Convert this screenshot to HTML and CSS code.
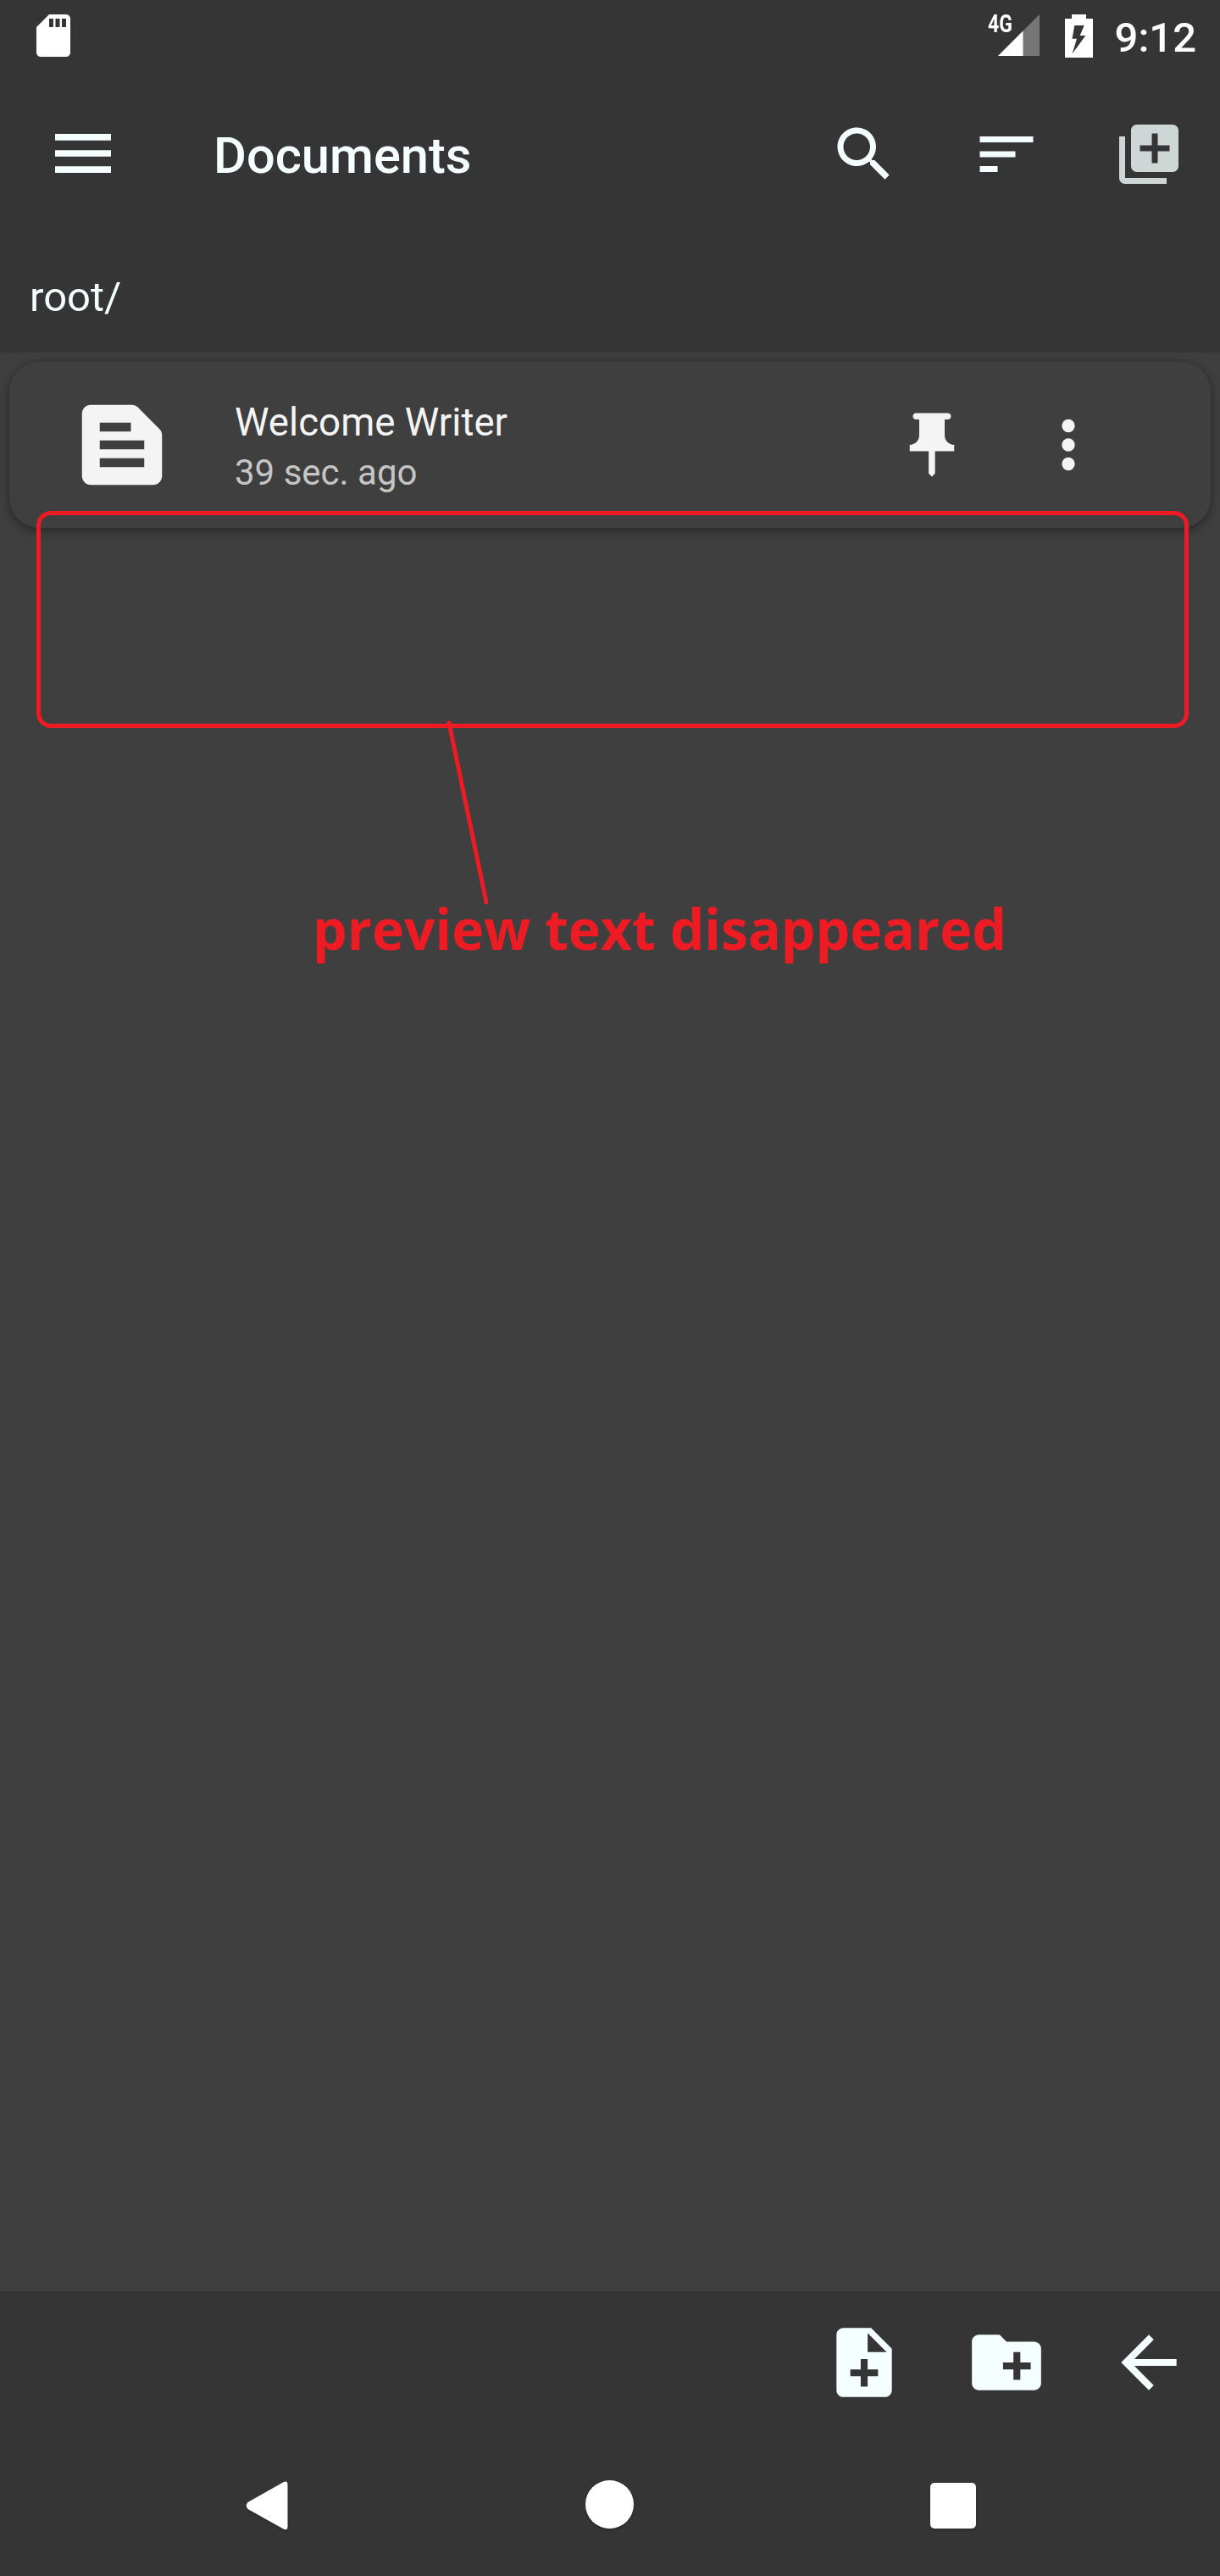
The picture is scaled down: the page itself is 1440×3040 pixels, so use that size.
FILE: index.html
```html
<!DOCTYPE html>
<html lang="en">
<head>
<meta charset="utf-8">
<title>Documents</title>
<link rel="stylesheet" href="styles.css">
</head>
<body>
<div class="screen">
  <header class="status-bar">
    <svg class="sd-card" viewBox="0 0 24 24"><path d="M18 2h-8L4 8v12c0 1.1.9 2 2 2h12c1.1 0 2-.9 2-2V4c0-1.100-.9-2-2-2zm-6 6h-2V4h2v4zm3 0h-2V4h2v4zm3 0h-2V4h2v4z"/></svg>
    <div class="signal">
      <span class="network">4G</span>
      <svg class="bars" viewBox="0 0 49 49"><path d="M0 49L49 0V49z" opacity=".32"/><path d="M0 49L29.500 19.500V49z"/></svg>
    </div>
    <svg class="battery" viewBox="0 0 33 51"><path fill-rule="evenodd" d="M8 0H25V5H33V51H0V5H8zM11.300 13H22.700L17.700 25H24.300L8.700 46.300L14 28.700H8.500z"/></svg>
    <span class="clock">9:12</span>
  </header>
  <nav class="toolbar">
    <svg class="menu" viewBox="0 0 66 46"><path d="M0 0H66V7.700H0zM0 19.150H66V26.850H0zM0 38.300H66V46H0z"/></svg>
    <h1 class="title">Documents</h1>
    <div class="actions">
      <svg class="icon" viewBox="0 0 24 24"><path d="M15.500 14h-.79l-.28-.27C15.410 12.590 16 11.110 16 9.500 16 5.910 13.090 3 9.500 3S3 5.910 3 9.500 5.910 16 9.500 16c1.610 0 3.090-.59 4.230-1.570l.27.28v.79l5 4.990L20.490 19l-4.990-5zm-6 0C7.010 14 5 11.990 5 9.500S7.010 5 9.500 5 14 7.010 14 9.500 11.990 14 9.500 14z"/></svg>
      <svg class="icon" viewBox="0 0 24 24"><path d="M3 18h6v-2H3v2zM3 6v2h18V6H3zm0 7h12v-2H3v2z"/></svg>
      <svg class="icon dim" viewBox="0 0 24 24"><path d="M4 6H2v14c0 1.100.9 2 2 2h14v-2H4V6zm16-4H8c-1.100 0-2 .9-2 2v12c0 1.100.9 2 2 2h12c1.100 0 2-.9 2-2V4c0-1.100-.9-2-2-2zm-1 9h-4v4h-2v-4H9V9h4V5h2v4h4v2z"/></svg>
    </div>
  </nav>
  <div class="path">root/</div>
  <main class="content">
    <article class="card">
      <svg class="file" viewBox="0 0 24 24"><path d="M20.410 8.410l-4.830-4.830C15.210 3.210 14.700 3 14.170 3H5C3.900 3 3 3.900 3 5v14c0 1.100.9 2 2 2h14c1.100 0 2-.9 2-2V9.830C21 9.300 20.790 8.790 20.410 8.410zM7 7h7v2H7V7zM17 17H7v-2h10V17zM17 13H7v-2h10V13z"/></svg>
      <div class="labels">
        <span class="name">Welcome Writer</span>
        <span class="age">39 sec. ago</span>
      </div>
      <svg class="pin" viewBox="0 0 24 24"><path d="M16 9V4h1c.55 0 1-.45 1-1s-.45-1-1-1H7c-.55 0-1 .45-1 1s.45 1 1 1h1v5c0 1.660-1.340 3-3 3v2h5.970v7l1 1 1-1v-7H19v-2c-1.660 0-3-1.340-3-3z"/></svg>
      <svg class="more" viewBox="0 0 24 24"><circle cx="12" cy="6" r="2.050"/><circle cx="12" cy="12" r="2.050"/><circle cx="12" cy="18" r="2.050"/></svg>
    </article>
    <div class="callout-box"></div>
    <svg class="callout-line" viewBox="0 0 54 224"><path d="M5 5L49 217"/></svg>
    <div class="callout-text">preview text disappeared</div>
  </main>
  <footer class="bottom-bar">
    <svg class="icon-lg" viewBox="0 0 24 24"><path d="M14 2H6c-1.100 0-2 .9-2 2v16c0 1.100.9 2 2 2h12c1.100 0 2-.9 2-2V8l-6-6zm2 14h-3v3h-2v-3H8v-2h3v-3h2v3h3v2zm-3-7V3.500L18.500 9H13z"/></svg>
    <svg class="icon-lg" viewBox="0 0 24 24"><path d="M20 6h-8l-2-2H4c-1.110 0-2 .89-2 2v12c0 1.110.89 2 2 2h16c1.110 0 2-.89 2-2V8c0-1.110-.89-2-2-2zm-1 8h-3v3h-2v-3h-3v-2h3V9h2v3h3v2z"/></svg>
    <svg class="icon-lg" viewBox="0 0 24 24"><path d="M20 11H7.830l5.590-5.590L12 4l-8 8 8 8 1.410-1.410L7.830 13H20v-2z"/></svg>
  </footer>
  <div class="system-nav">
    <svg class="back" viewBox="0 0 50 58"><path d="M2.500 25L44.500 1.200Q49.500 -.8 49.500 4V54Q49.500 58.800 44.500 56.500L2.500 33Q-1 29 2.500 25z"/></svg>
    <span class="home"></span>
    <span class="recent"></span>
  </div>
</div>
</body>
</html>
```
FILE: styles.css
```css
* { box-sizing: border-box; }
body { margin: 0; background: #3f3f3f; font-family: Roboto, sans-serif; }
svg { display: block; flex: none; fill: currentColor; }
.screen { width: 1440px; height: 3040px; display: flex; flex-direction: column; overflow: hidden; color: #f5ffff; }

.status-bar { height: 84px; padding: 0 28px 0 33px; display: flex; align-items: center; background: #353535; color: #fff; }
.sd-card { width: 60px; height: 60px; }
.signal { display: flex; align-items: flex-start; margin-left: auto; height: 50px; }
.network { width: 12px; font: 700 29.500px/22px Roboto, sans-serif; white-space: nowrap; }
.network { transform: scaleX(.78); transform-origin: 0 0; }
.bars { width: 49px; height: 49px; }
.battery { width: 33px; height: 51px; margin-left: 30px; }
.clock { margin-left: 26px; padding-top: 5px; font-size: 49px; font-weight: 500; line-height: 58px; }

.toolbar { height: 196px; padding: 0 42px 0 65px; display: flex; align-items: center; background: #353535; }
.menu { width: 66px; height: 46px; margin-top: -3px; }
.title { margin: 4px 0 0 121px; font-size: 59.600px; font-weight: 500; line-height: 70px; }
.actions { display: flex; gap: 84px; margin-left: auto; }
.icon { width: 84px; height: 84px; }
.dim { opacity: .8; }

.path { height: 136px; padding: 42px 35px 0; font-size: 49px; line-height: 58px; background: #353535; }

.content { position: relative; flex: 1; padding: 11px; background: #3f3f3f; }
.card { height: 196px; padding-left: 70px; display: flex; align-items: center; border-radius: 35px; background: #3f3f3f; color: #f4f4f4; box-shadow: 0 4px 12px rgba(0, 0, 0, .3), 0 0 8px rgba(0, 0, 0, .14); }
.file { width: 126px; height: 126px; }
.labels { width: 778px; margin-left: 70px; padding-top: 6px; display: flex; flex-direction: column; }
.name { font-size: 45.700px; line-height: 60px; }
.age { font-size: 42px; line-height: 58px; color: #c5c5c5; }
.pin { width: 90px; height: 90px; }
.more { width: 90px; height: 90px; margin-left: 71px; }

/* Red annotation laid over the file list */
.callout-box { position: absolute; left: 43px; top: 187px; width: 1360px; height: 256px; border: 5px solid #ed1c24; border-radius: 17px; }
.callout-line { position: absolute; left: 525px; top: 432px; width: 54px; height: 224px; fill: none; stroke: #ed1c24; stroke-width: 5; stroke-linecap: round; }
.callout-text { position: absolute; left: 369px; top: 633px; font: 700 67px/92px "Open Sans", sans-serif; color: #ed1c24; white-space: nowrap; transform: scaleX(.96); transform-origin: 0 0; }

.bottom-bar { height: 168px; padding-right: 35px; display: flex; align-items: center; justify-content: flex-end; gap: 70px; background: #353535; }
.icon-lg { width: 98px; height: 98px; }

.system-nav { height: 168px; padding: 0 288px 0 290px; display: flex; align-items: center; justify-content: space-between; background: #353535; border-bottom: 1px solid #3b3339; color: #fff; }
.back { width: 50px; height: 58px; margin-top: 2px; filter: drop-shadow(0 2px 1px rgba(0, 0, 0, .2)); }
.home { width: 57px; height: 57px; border-radius: 50%; background: #fff; box-shadow: 0 2px 3px rgba(0, 0, 0, .2); }
.recent { width: 54px; height: 54px; margin-top: 2px; border-radius: 5px; background: #fff; box-shadow: 0 2px 3px rgba(0, 0, 0, .2); }
```
